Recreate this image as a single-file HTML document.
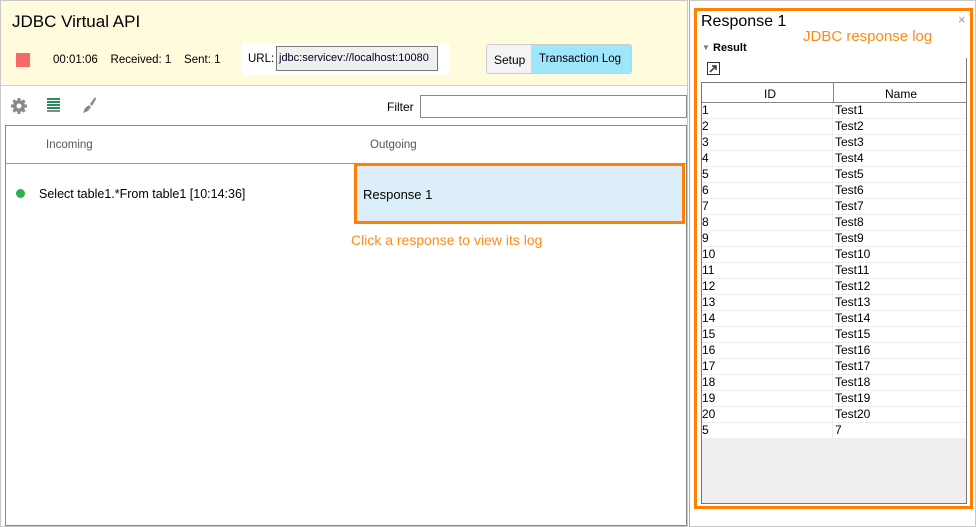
<!DOCTYPE html>
<html><head><style>
*{box-sizing:border-box;margin:0;padding:0}
body{width:976px;height:527px;background:#fff;font-family:"Liberation Sans",sans-serif;font-size:12px;color:#000;position:relative;overflow:hidden}
.a{position:absolute}
.r{display:flex;border-bottom:1px solid #eee;height:16px;background:#fff}
.r div{line-height:15px}
.r div:first-child{width:131px;border-right:1px solid #eee}
.r div:last-child{padding-left:2px}
</style></head><body>
<div class="a" style="left:0;top:0;width:688px;height:527px;border:1px solid #c8c8c8"></div>
<div class="a" style="left:1px;top:1px;width:686px;height:85px;background:#fffbdc;border-bottom:1px solid #d0d0d0"></div>
<div class="a" style="left:12px;top:12px;font-size:17px">JDBC Virtual API</div>
<div class="a" style="left:16px;top:53px;width:14px;height:14px;background:#f86a6a"></div>
<div class="a" style="left:53px;top:54px;font-size:11.5px">00:01:06&nbsp;&nbsp;&nbsp;&nbsp;Received: 1&nbsp;&nbsp;&nbsp;&nbsp;Sent: 1</div>
<div class="a" style="left:242px;top:43px;width:208px;height:32px;background:#fff"></div>
<div class="a" style="left:248px;top:53px;font-size:11.5px">URL:</div>
<div class="a" style="left:276px;top:46px;width:162px;height:25px;border:1px solid #777;background:#f0f0f0;padding:5px 2px;color:#002;font-size:11px;white-space:nowrap;overflow:hidden">jdbc:servicev://localhost:10080</div>
<div class="a" style="left:486px;top:44px;width:146px;height:30px;border:1px solid #ccc;border-radius:3px;background:#f4f4f4"></div>
<div class="a" style="left:494px;top:53px">Setup</div>
<div class="a" style="left:531px;top:45px;width:100px;height:28px;background:#9ee6fb"></div>
<div class="a" style="left:539px;top:53px;font-size:11.5px">Transaction Log</div>
<svg class="a" style="left:10px;top:97px" width="18" height="18" viewBox="0 0 18 18"><g fill="#8a8a8a"><circle cx="9" cy="9" r="6"/><rect x="7.5" y="1" width="3" height="16"/><rect x="1" y="7.5" width="16" height="3"/><rect x="7.5" y="1" width="3" height="16" transform="rotate(45 9 9)"/><rect x="7.5" y="1" width="3" height="16" transform="rotate(-45 9 9)"/></g><circle cx="9" cy="9" r="2.5" fill="#fff"/></svg>
<svg class="a" style="left:47px;top:97px" width="14" height="16"><g fill="#2e8b57"><rect y="1" width="13" height="2"/><rect y="4" width="13" height="2"/><rect y="7" width="13" height="2"/><rect y="10" width="13" height="2"/></g><rect y="13" width="13" height="2" fill="#888"/></svg>
<svg class="a" style="left:81px;top:96px" width="16" height="18"><path d="M14 1 L9 8 L11 10 L15 3Z M8 9 L4 12 L2 17 L7 15 L10 11Z" fill="#888"/></svg>
<div class="a" style="left:387px;top:100px">Filter</div>
<div class="a" style="left:420px;top:95px;width:267px;height:23px;border:1px solid #888;background:#fff"></div>
<div class="a" style="left:5px;top:125px;width:682px;height:401px;border:1px solid #888"></div>
<div class="a" style="left:6px;top:163px;width:680px;height:1px;background:#999"></div>
<div class="a" style="left:46px;top:139px;color:#555;font-size:11.5px">Incoming</div>
<div class="a" style="left:370px;top:139px;color:#555;font-size:11.5px">Outgoing</div>
<div class="a" style="left:16px;top:189px;width:9px;height:9px;border-radius:50%;background:#2db14a"></div>
<div class="a" style="left:39px;top:187px;font-size:12.5px">Select table1.*From table1 [10:14:36]</div>
<div class="a" style="left:354px;top:163px;width:331px;height:61px;border:3px solid #ff8000;background:#dbeefa"></div>
<div class="a" style="left:363px;top:187px;font-size:13px">Response 1</div>
<div class="a" style="left:351px;top:232px;font-size:14px;color:#ff8a1a">Click a response to view its log</div>
<div class="a" style="left:689px;top:0;width:287px;height:527px;border:1px solid #c8c8c8;border-left:1px solid #aaa"></div>
<div class="a" style="left:694px;top:8px;width:279px;height:501px;border:3px solid #ff8000"></div>
<div class="a" style="left:701px;top:13px;font-size:16px">Response 1</div>
<div class="a" style="left:958px;top:12px;font-size:13px;color:#999">×</div>
<div class="a" style="left:803px;top:28px;font-size:15px;color:#ff8a1a">JDBC response log</div>
<div class="a" style="left:702px;top:43px;font-size:8px;color:#777">▼</div>
<div class="a" style="left:713px;top:42px;font-weight:bold;font-size:11px">Result</div>
<div class="a" style="left:966px;top:58px;width:1px;height:26px;background:#777"></div>
<svg class="a" style="left:707px;top:62px" width="13" height="13"><rect x="0.5" y="0.5" width="12" height="12" fill="none" stroke="#333"/><path d="M3 10 L9 4 M5 4 H9 V8" stroke="#333" stroke-width="1.5" fill="none"/></svg>
<div class="a" style="left:701px;top:82px;width:266px;height:422px;border:1px solid #777;background:#efefef"></div>
<div class="a" style="left:702px;top:83px;width:264px;height:20px;background:#fff;border-bottom:1px solid #888"></div>
<div class="a" style="left:833px;top:83px;width:1px;height:20px;background:#888"></div>
<div class="a" style="left:764px;top:87px">ID</div>
<div class="a" style="left:885px;top:87px">Name</div>
<div class="a" style="left:702px;top:103px;width:264px;font-size:12px;line-height:16px">
<div class="r"><div>1</div><div>Test1</div></div>
<div class="r"><div>2</div><div>Test2</div></div>
<div class="r"><div>3</div><div>Test3</div></div>
<div class="r"><div>4</div><div>Test4</div></div>
<div class="r"><div>5</div><div>Test5</div></div>
<div class="r"><div>6</div><div>Test6</div></div>
<div class="r"><div>7</div><div>Test7</div></div>
<div class="r"><div>8</div><div>Test8</div></div>
<div class="r"><div>9</div><div>Test9</div></div>
<div class="r"><div>10</div><div>Test10</div></div>
<div class="r"><div>11</div><div>Test11</div></div>
<div class="r"><div>12</div><div>Test12</div></div>
<div class="r"><div>13</div><div>Test13</div></div>
<div class="r"><div>14</div><div>Test14</div></div>
<div class="r"><div>15</div><div>Test15</div></div>
<div class="r"><div>16</div><div>Test16</div></div>
<div class="r"><div>17</div><div>Test17</div></div>
<div class="r"><div>18</div><div>Test18</div></div>
<div class="r"><div>19</div><div>Test19</div></div>
<div class="r"><div>20</div><div>Test20</div></div>
<div class="r"><div>5</div><div>7</div></div>
</div>
</body></html>
